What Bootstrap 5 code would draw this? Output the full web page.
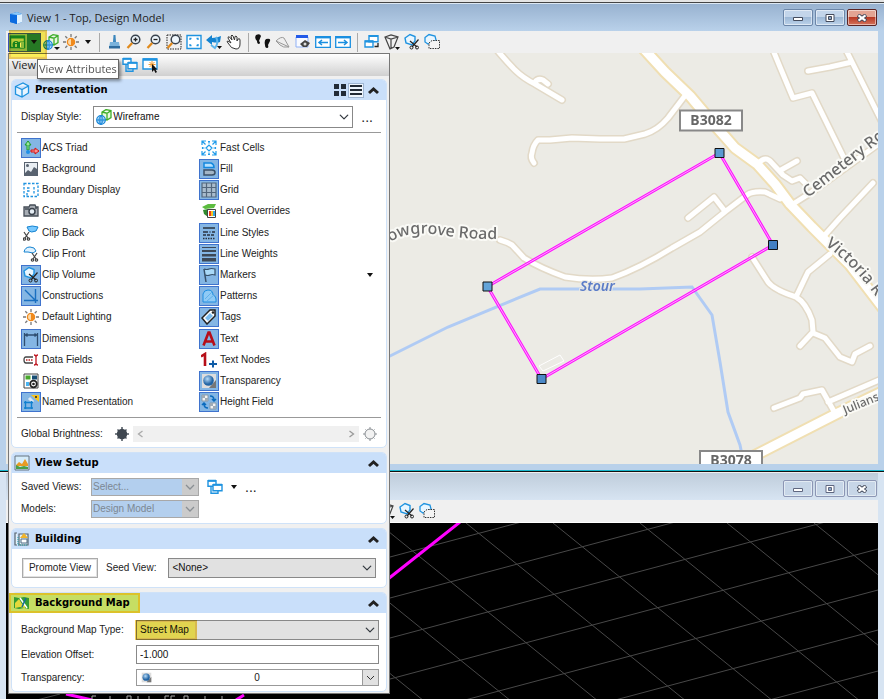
<!DOCTYPE html>
<html lang="en">
<head>
<meta charset="utf-8">
<meta name="viewport" content="width=device-width, initial-scale=1">
<title>View 1 - Top, Design Model</title>
<link href="https://cdn.jsdelivr.net/npm/bootstrap@5.3.0/dist/css/bootstrap.min.css" rel="stylesheet">
<style>
body{font-family:"Liberation Sans",Arial,sans-serif;font-size:10px;line-height:14px;color:#222;background:#f0f0f0}
button{padding:0;border:0;background:none;color:inherit}
svg{display:block;flex:none}
.win{border:solid #b9d1ea;border-width:0 6px 6px}
.win-a{z-index:5;box-shadow:0 1px #18b6cc,0 2px #111}
.edge-top{height:4px;background:linear-gradient(#e4e4e4 0 50%,#444 50% 75%,#dbe7f3 75%)}
.win-b{border-color:#d7e4f2;border-bottom:0;margin-top:3px;overflow:hidden}
.titlebar{height:27px;margin:0 -6px;padding:0 7px 0 9px;background:linear-gradient(#98b2d0,#b9d1ea);font:11px/16px "Open Sans",sans-serif;color:#222}
.win-b .titlebar{background:linear-gradient(#bfcddb,#d7e4f2)}
.wbtns{gap:2px}
.wbtn{width:30px;height:17px;border:1px solid #6c86a8;border-radius:2px;background:linear-gradient(#c3d5ea 45%,#9db8d6 50%,#bcd2ea);box-shadow:inset 0 0 0 1px #ffffff80}
.wbtn.shut{background:linear-gradient(#e3a493 45%,#b93a25 50%,#d4735c);border-color:#5c2525}
.win-b .wbtn{background:#c7d6e7;border-color:#8c96b4}
.toolstrip{height:22px;background:#f0f0f0}
.tool{width:20px;height:20px}
.vsep{width:1px;height:19px;background:#aaa;margin:0 4px}
.attr-btn{width:33px;height:19px;border:1px solid #3c53b8;background:#8fbfa0;margin-left:2px}
.attr-btn .drop{width:13px;height:17px;background:#268065}
.caret{width:0;height:0;border:3px solid transparent;border-top:4px solid #111;border-bottom:0}
.hl{background:#ffea00;opacity:.65;mix-blend-mode:multiply;pointer-events:none;box-shadow:inset 0 0 0 2px #f0b800}
.hl-tool{left:3px;top:-1px;width:38px;height:29px}
.tip{left:31px;top:28px;padding:1px;border:1px solid #666;background:#fff;color:#555;font:11px/16px "Open Sans",sans-serif;box-shadow:2px 2px 3px #0006;white-space:nowrap;z-index:9}
.panel{left:2px;top:100%;width:382px;border:1px solid #777;background:#f0f0f0}
.strip{height:22px;padding-left:3px;background:linear-gradient(#fff,#d0d0d0);font:11px/20px "Open Sans",sans-serif}
.strip-title{width:108px}
.groups{padding:3px 2px 1px;gap:4px}
.grp{border:1px solid #cfe2f8;border-radius:5px;background:#fff}
.ghead{height:20px;background:#c9dffa;border-radius:4px 4px 0 0;padding:0 7px 0 2px}
.ghead h2{font:bold 10px/20px "DejaVu Sans",Verdana,sans-serif;margin:0 0 0 5px;color:#000}
.gmark{margin-left:-5px;padding:0 10px 0 5px;height:20px;background:#c6de64;box-shadow:inset 0 0 0 2px #dcc22a}
.gb1{padding:6px 5px 5px}
.gb2{padding:5px 9px}
.gb3{padding:9px 10px}
.gb4{padding:7px 7px 5px 9px;gap:5px}
.viewmode{width:16px;height:15px}
.viewmode.on{background:#eef5fd;box-shadow:inset 0 0 0 1px #9fb6d3}
.form-select,.form-control{font-size:10px;line-height:14px;border:1px solid #888;border-radius:0;color:#111;padding:0 20px 0 3px;background-size:10px 10px;background-position:right 3px center;min-height:0}
.form-select{background-color:#e1e1e1}
.s-style{height:22px;width:260px;padding-left:19px;background-color:#fff}
.s-dim{height:18px;width:108px;background-color:#b3cfee!important;border-color:#a8a8a8;color:#7c8792;padding-left:1px;opacity:1}
.s-wrap .s-arrow{right:1px;top:1px;width:16px;height:16px;background:#cbcbcb;pointer-events:none}
.s-icon{left:3px;top:3px}
.rule{height:1px;background:#999}
.items{min-height:276px;grid-auto-rows:1fr;grid-template-columns:178px 1fr}
.tog{gap:1px;cursor:pointer}
.tog i{width:20px;height:20px;display:flex;align-items:center;justify-content:center;border:1px solid transparent}
.btn-check:checked+.tog i{background:#84b6e4;border-color:#3f73cd}
.dots{font-size:14px;line-height:14px}
.track{height:16px;background:#f0f0f0;color:#999}
.track input{opacity:0;height:14px}
.lab2{width:70px}
.lab4{width:115px}
.prom{height:20px;width:76px;border:1px solid #aaa;box-shadow:inset 0 0 0 1px #e1e1e1;background:#fff}
.s20{height:20px}.s19{height:19px}
.hl-sel{left:-1px;top:0;width:62px;height:20px}
.slider-box{height:17px;border:1px solid #999;background:#fff}
.slider-box button{width:16px;height:15px;background:#e1e1e1;border-left:1px solid #999}
.lead-space{width:371px}
.scene{width:100%;height:auto}
.grid-scene{width:100%;flex:1 1 0;min-height:100px;border-top:1px solid #fff;background:#000}
.road text{font-family:"Noto Sans","Open Sans",sans-serif}
</style>
<script src="https://cdn.jsdelivr.net/npm/bootstrap@5.3.0/dist/js/bootstrap.bundle.min.js"></script>
</head>
<body class="vh-100 overflow-hidden d-flex flex-column">

<svg width="0" height="0" class="position-absolute" aria-hidden="true">
<defs>
<radialGradient id="ball" cx=".4" cy=".35"><stop offset="0" stop-color="#b8dcf8"/><stop offset="1" stop-color="#2264a4"/></radialGradient>
<linearGradient id="hand" x1="0" y1="0" x2="1" y2="1"><stop offset="0" stop-color="#7cc0ea"/><stop offset="1" stop-color="#2a63b0"/></linearGradient>
<g id="sun" fill="none" stroke="#777" stroke-width="1.3"><path d="M8 0v3M8 13v3M0 8h3M13 8h3M2.3 2.3l2 2M11.7 11.7l2 2M13.7 2.3l-2 2M4.3 11.7l-2 2"/><circle cx="8" cy="8" r="3.6" stroke="#f08a1d" fill="#fbd9a8"/><path d="M8 4.4a3.6 3.6 0 0 1 0 7.2z" fill="#f08a1d" stroke="none"/></g>
<g id="globecube" fill="none"><path d="M6 3l4-2.400 5 1v7l-4 2.400-5-1zM6 3l5 1.200 4-2.600M11 4.200v7" stroke="#3fae2a" stroke-width="1.300" fill="#e8f8e0"/><circle cx="5" cy="11" r="4.300" fill="#bfe2fb" stroke="#1585d8" stroke-width="1.200"/><path d="M.7 11h8.600M5 6.700v8.600M5 6.700c-2.600 2.500-2.600 6 0 8.600 2.600-2.600 2.600-6.100 0-8.600" stroke="#1585d8"/></g>
<g id="cube" fill="#eaf5ff" stroke="#1f93e0" stroke-width="1.300"><path d="M1.500 4.500 9 1l5.500 3v7L8 15l-6.500-3zM1.500 4.500 8 7.500l6.500-3.500M8 7.500V15"/></g>
<g id="volcut" fill="none"><path d="M1 4l5-3.500 5 2v4.500l-3 4-6-2z" fill="#e9f6ff" stroke="#1f93e0" stroke-width="1.400"/><path d="M6 7l7 6M14.500 5.500 8 13" stroke="#222" stroke-width="1.200"/><circle cx="7.500" cy="13.500" r="1.500" stroke="#222"/><circle cx="13" cy="13.500" r="1.500" stroke="#222"/></g>
<g id="scis" fill="none" stroke="#444" stroke-width="1.200"><path d="M1 0l4 6M6 0 2 6"/><circle cx="1.500" cy="7" r="1.200"/><circle cx="5.500" cy="7" r="1.200"/></g>
<g id="volmask" fill="none"><path d="M1 3.500l4-3 6 1.500 1 4-3 2-5 2-3-2z" fill="#e9f6ff" stroke="#1f93e0" stroke-width="1.300"/><path d="M5 9l3-2.500h7.500v8H5z" fill="#f4f4f4" stroke="#333" stroke-dasharray="1.500 1"/></g>
<g id="frust" fill="none" stroke="#444" stroke-width="1.200"><path d="M1 3l6-2 7 2-4 10-4 2zM1 3l6 2 7-2M7 5v9"/><path d="M11 13h5l-2.500 3z" fill="#111" stroke="none"/></g>
<g id="wins" fill="#fff" stroke="#1f93e0" stroke-width="1.400"><path d="M1 1.700h8v5.600H1z"/><path d="M6 5.700h9v6H6z"/><path d="M4 7v7.300h7V12" fill="none"/><path d="M1 1.700h8M6 5.700h9" stroke-width="2"/></g>
<g id="xmark"><path d="M1 1l8 6M9 1 1 7" stroke="#444b5c" stroke-width="4"/><path d="M1.500 1.400l7 5.200M8.500 1.400l-7 5.200" stroke="#fff" stroke-width="2"/></g>
<g id="trans"><path d="M1 1h14v14H1z" fill="#ddd"/><path d="M8 15h7V7z" fill="#777"/><circle cx="7.500" cy="7.500" r="5.300" fill="url(#ball)"/></g>
<g id="up" fill="none" stroke="#222" stroke-width="3"><path d="M1 7l4.500-4L10 7"/></g>
<g id="lens" fill="none"><circle cx="9.500" cy="5.500" r="4.300" fill="#eef6fc" stroke="#39434e" stroke-width="1.500"/><path d="M6.200 9 1.500 14" stroke="#e08a1d" stroke-width="2.300"/></g>
<g id="vp" fill="#fff" stroke="#1a8fe0" stroke-width="1.300"><path d="M.7 2.700h14.600v10.600H.7z"/><path d="M.7 3.200h14.600" stroke-width="2.400"/></g>
<g id="down" fill="none" stroke="#8a8f94" stroke-width="1.300"><path d="M4 6l4 4 4-4"/></g>
</defs>
</svg>

<div class="edge-top"></div>
<section class="win win-a position-relative" aria-label="View 1">
  <header class="titlebar d-flex align-items-center">
    <svg width="14" height="14" viewBox="0 0 14 14"><path d="M1 3l7-2 5 2v8l-5 2-7-2z" fill="#1273d8"/><path d="M1 3l7 1v9l-7-2z" fill="#0b6be0"/><path d="M8 4l5-1v8l-5 2z" fill="#dff1ff"/><path d="M1 3l7-2 5 2-5 1z" fill="#8cc8f8"/></svg>
    <span class="ms-1">View 1 - Top, Design Model</span>
    <div class="ms-auto d-flex wbtns">
      <button class="wbtn d-flex align-items-center justify-content-center" aria-label="Minimize"><svg width="10" height="8"><path d="M.5 3.500h9v3h-9z" fill="#fff" stroke="#444b5c"/></svg></button>
      <button class="wbtn d-flex align-items-center justify-content-center" aria-label="Maximize"><svg width="10" height="8"><path d="M1 .5h8v7H1z" fill="#fff" stroke="#444b5c"/><path d="M3.500 2.500h3v3h-3z" fill="#8ba6c6" stroke="#444b5c"/></svg></button>
      <button class="wbtn shut d-flex align-items-center justify-content-center" aria-label="Close"><svg width="10" height="8"><use href="#xmark"/></svg></button>
    </div>
  </header>

  <div class="toolstrip position-relative d-flex align-items-center">
    <button class="attr-btn d-flex align-items-center justify-content-between" aria-label="View Attributes">
      <svg width="17" height="16" viewBox="0 0 17 16"><path d="M1.500 2.500h14v11h-14z" fill="#b9d9a0" stroke="#168a4c" stroke-width="1.500"/><path d="M1 3h15" stroke="#168a4c" stroke-width="3"/><circle cx="7" cy="10.500" r="3.500" fill="#168a4c"/><path d="M7 8v1M7 10v3" stroke="#fff" stroke-width="1.300"/><path d="M10.500 8h5v6h-5z" fill="#fff" stroke="#168a4c"/><path d="M12 10h3M12 12h3" stroke="#168a4c"/></svg>
      <span class="drop d-flex align-items-center justify-content-center"><span class="caret"></span></span>
    </button>
    <button class="tool" aria-label="Display style"><svg width="20" height="20" viewBox="-2 -2 20 20"><use href="#globecube"/><path d="M11 13h6l-3 3z" fill="#111"/></svg></button>
    <button class="tool" aria-label="Brightness"><svg width="20" height="20" viewBox="-2 -2 20 20"><use href="#sun"/></svg></button>
    <button class="px-1 me-1" aria-label="Brightness options"><span class="caret d-block"></span></button>
    <span class="vsep ms-0"></span>
    <button class="tool" aria-label="Update view"><svg width="20" height="20" viewBox="-2 -2 20 20"><path d="M7.500 1h2l.5 7H7z" fill="#3c87bd"/><path d="M4 8h9l1 6H3z" fill="#7ab3dc"/><path d="M3 12h11v2.500H3z" fill="#2e6c9e"/></svg></button>
    <button class="tool" aria-label="Zoom in"><svg width="20" height="20" viewBox="-2 -2 20 20"><use href="#lens"/><path d="M7.500 5.500h4M9.500 3.500v4" stroke="#222" stroke-width="1.300"/></svg></button>
    <button class="tool" aria-label="Zoom out"><svg width="20" height="20" viewBox="-2 -2 20 20"><use href="#lens"/><path d="M7.500 5.500h4" stroke="#222" stroke-width="1.300"/></svg></button>
    <button class="tool" aria-label="Window area"><svg width="20" height="20" viewBox="-2 -2 20 20"><path d="M1 1h14v14H1z" fill="none" stroke="#222" stroke-dasharray="1.500 1"/><use href="#lens"/></svg></button>
    <button class="tool" aria-label="Fit view"><svg width="20" height="20" viewBox="-2 -2 20 20"><path d="M1 1.500h14v13H1z" fill="#fff" stroke="#1f93e0" stroke-width="1.400"/><path d="M4 6V4.500h1.500M10.500 4.500H12V6M12 10v1.500h-1.500M5.500 11.500H4V10" fill="none" stroke="#1f93e0" stroke-width="1.300"/></svg></button>
    <button class="tool" aria-label="Rotate view"><svg width="20" height="20" viewBox="-2 -2 20 20"><path d="M0 6l6-5v3q5 0 9-2l-1 6q-3 1-8 0v3z" fill="#1683cf"/><path d="M10 3q3 6-1 11l-4-3" fill="none" stroke="#5cb5ec" stroke-width="2"/><path d="M11 12h5l-2.500 3z" fill="#111"/></svg></button>
    <button class="tool" aria-label="Pan view"><svg width="20" height="20" viewBox="-2 -2 20 20"><path d="M2 9Q0 7 2 7l3 2-3-5q0-2 1.500-1L6 6 5 2q1-2 2 0l1.500 4L9 2.500q1-1 2 .5v4l1-2q2-1 2 1v4q0 5-4 5-5 0-8-6z" fill="#fff" stroke="#333"/></svg></button>
    <span class="vsep"></span>
    <button class="tool" aria-label="Walk"><svg width="20" height="20" viewBox="-2 -2 20 20" fill="#111"><path d="M1 1q4-2 5 1L4 7q2 2 0 3-2 0-2-3Q-1 4 1 1zM11 5q5-1 4 2l-2 4q1 3-1 3-2 0-2-3-1-4 1-6z"/></svg></button>
    <button class="tool" aria-label="Fly"><svg width="20" height="20" viewBox="-2 -2 20 20"><path d="M1 7q5-5 8-3l5 9q-6 1-9-2zM1 7l13 6" fill="#eee" stroke="#999"/></svg></button>
    <button class="tool" aria-label="Navigate view"><svg width="20" height="20" viewBox="-2 -2 20 20"><path d="M1 3h12v10H1z" fill="#f8faff" stroke="#8fb0f5"/><path d="M1 2.500h12" stroke="#235ae8" stroke-width="3"/><path d="M5 10l5-4 5 3-3 4H8z" fill="#444"/><circle cx="10" cy="10" r="1.500" fill="#ddd"/></svg></button>
    <button class="tool" aria-label="View previous"><svg width="20" height="20" viewBox="-2 -2 20 20"><use href="#vp"/><path d="M13 8.500H5M7 6 4 8.500 7 11" fill="none" stroke="#1a8fe0" stroke-width="1.500"/></svg></button>
    <button class="tool" aria-label="View next"><svg width="20" height="20" viewBox="-2 -2 20 20"><use href="#vp"/><path d="M3 8.500h8M9 6l3 2.500L9 11" fill="none" stroke="#1a8fe0" stroke-width="1.500"/></svg></button>
    <span class="vsep"></span>
    <button class="tool" aria-label="Copy view"><svg width="20" height="20" viewBox="-2 -2 20 20"><path d="M5 1.700h9v6H5zM1 7h8v6H1z" fill="#fff" stroke="#1f93e0" stroke-width="1.400"/><path d="M5 2h9M1 7.500h8" stroke="#1f93e0" stroke-width="2"/><path d="M10.500 12.500H14V9" fill="none" stroke="#222" stroke-width="1.300"/></svg></button>
    <button class="tool" aria-label="Perspective"><svg width="20" height="20" viewBox="-2 -2 20 20"><use href="#frust"/></svg></button>
    <button class="tool" aria-label="Clip volume"><svg width="20" height="20" viewBox="-2 -2 20 20"><use href="#volcut"/></svg></button>
    <button class="tool" aria-label="Clip mask"><svg width="20" height="20" viewBox="-2 -2 20 20"><use href="#volmask"/></svg></button>

    <aside class="panel position-absolute" aria-label="View Attributes">
      <div class="strip d-flex align-items-center">
        <span class="strip-title">View</span>
        <button class="tool" aria-label="Dialogs"><svg width="20" height="20" viewBox="-2 -2 20 20"><use href="#wins"/></svg></button>
        <button class="tool" aria-label="Pick view"><svg width="20" height="20" viewBox="-2 -2 20 20"><path d="M1 2h14v10H1z" fill="#fff" stroke="#1f93e0" stroke-width="1.400"/><path d="M1 2.500h14" stroke="#1f93e0" stroke-width="2.500"/><path d="M10 4v7M6.500 7.500h7M7.500 5l5 5M12.500 5l-5 5" stroke="#f09a2e"/><path d="M10 7v8l2-2 1.500 3 1.500-1-1.500-2.500h2z" fill="#111"/></svg></button>
      </div>
      <div class="groups d-flex flex-column">

        <section class="grp">
          <div class="ghead d-flex align-items-center">
            <svg width="16" height="16" viewBox="0 0 16 16"><use href="#cube"/></svg>
            <h2 class="me-auto">Presentation</h2>
            <button class="viewmode d-flex align-items-center justify-content-center" aria-label="Icons"><svg width="12" height="12"><path d="M0 0h5v5H0zM7 0h5v5H7zM0 7h5v5H0zM7 7h5v5H7z" fill="#222b36"/></svg></button>
            <button class="viewmode on d-flex align-items-center justify-content-center" aria-label="List"><svg width="12" height="12"><path d="M0 2h12M0 6h12M0 10h12" stroke="#222b36" stroke-width="2"/></svg></button>
            <button class="ms-1" aria-label="Collapse Presentation"><svg width="11" height="9"><use href="#up"/></svg></button>
          </div>
          <div class="gb1">
            <div class="d-flex align-items-center ps-1">
              <label for="style" class="me-auto">Display Style:</label>
              <div class="position-relative me-2">
                <select id="style" class="form-select s-style"><option>Wireframe</option></select>
                <svg class="position-absolute s-icon" width="16" height="16"><use href="#globecube"/></svg>
              </div>
              <button class="dots pe-2" aria-label="Display style dialog">...</button>
            </div>
            <div class="rule mt-1 mb-1"></div>
            <div class="items d-grid align-items-center ps-1">
              <div><input type="checkbox" class="btn-check" id="c1" checked><label for="c1" class="tog d-flex align-items-center"><i><svg width="16" height="16" viewBox="0 0 16 16"><path d="M4 10V5H2l3-4 3 4H6v5z" fill="#9ce79c" stroke="#1a9a2a"/><path d="M8 10h4V8l4 3-4 3v-2H8z" fill="#ff9090" stroke="#d01515"/><circle cx="5" cy="12" r="2" fill="#1f8fe8"/></svg></i>ACS Triad</label></div>
              <div><input type="checkbox" class="btn-check" id="d1"><label for="d1" class="tog d-flex align-items-center"><i><svg width="16" height="16" viewBox="0 0 16 16" fill="none" stroke="#1f9bea" stroke-width="1.200"><path d="M5 8l3-3 3 3-3 3zM1 5V1h4M1 1l3.500 3.500M11 1h4v4M15 1l-3.500 3.500M15 11v4h-4M15 15l-3.500-3.500M5 15H1v-4M1 15l3.500-3.500M7 1.500h2M8 1.500v2M7 14.500h2M8 14.500v-2M1.500 7v2M1.500 8h2M14.500 7v2M14.500 8h-2"/></svg></i>Fast Cells</label></div>
              <div><input type="checkbox" class="btn-check" id="c2"><label for="c2" class="tog d-flex align-items-center"><i><svg width="16" height="16" viewBox="0 0 16 16"><path d="M1 1h14v14H1z" fill="#596370"/><path d="M2 2h12v6l-3-2-3 5-3-2-3 3z" fill="#e9eef3"/><circle cx="4.500" cy="4.500" r="1.500" fill="#596370"/></svg></i>Background</label></div>
              <div><input type="checkbox" class="btn-check" id="d2" checked><label for="d2" class="tog d-flex align-items-center"><i><svg width="16" height="16" viewBox="0 0 16 16"><path d="M3 2h7q3 1 3 4.500H3z" fill="#b5e1ff" stroke="#1388de" stroke-width="1.500"/><path d="M3 9h8q3 0 3 2.500T11 14H3z" fill="#a4b6c6" stroke="#3d5268" stroke-width="1.500"/></svg></i>Fill</label></div>
              <div><input type="checkbox" class="btn-check" id="c3"><label for="c3" class="tog d-flex align-items-center"><i><svg width="16" height="16" viewBox="0 0 16 16" fill="none" stroke="#1f93e0" stroke-width="1.300" stroke-dasharray="2.500 1.500"><path d="M1 1.500h14v13H1zM4 6h4M4 9h4M4 11v3M11 5v8"/></svg></i>Boundary Display</label></div>
              <div><input type="checkbox" class="btn-check" id="d3" checked><label for="d3" class="tog d-flex align-items-center"><i><svg width="16" height="16" viewBox="0 0 16 16"><path d="M1 1h14v14H1z" fill="#a9bccd"/><path d="M1 1h14v14H1zM5.500 1v14M10.500 1v14M1 5.500h14M1 10.500h14" fill="none" stroke="#53677c" stroke-width="1.200"/></svg></i>Grid</label></div>
              <div><input type="checkbox" class="btn-check" id="c4"><label for="c4" class="tog d-flex align-items-center"><i><svg width="16" height="16" viewBox="0 0 16 16"><path d="M1 4h5l1-2h5l1 2h2v9H1z" fill="#a7adb4" stroke="#454d57" stroke-width="1.300"/><path d="M2 6h4M12 5h2" stroke="#454d57" stroke-width="1.500"/><circle cx="9" cy="8.500" r="3" fill="#e6eef5" stroke="#3b434d" stroke-width="1.500"/></svg></i>Camera</label></div>
              <div><input type="checkbox" class="btn-check" id="d4"><label for="d4" class="tog d-flex align-items-center"><i><svg width="16" height="16" viewBox="0 0 16 16"><path d="M1 4l6-3 8 0-2 4-9 1z" fill="#5cbc3f"/><path d="M2 7l5-1v8l-4-3z" fill="#318b2f"/><path d="M6.500 6.500h8v8h-8z" fill="#fff" stroke="#444"/><path d="M8 8h2v5H8z" fill="#ed3b20"/><path d="M10 8h2v5h-2z" fill="#f7c61e"/><path d="M12 8h2v5h-2z" fill="#31a5e8"/></svg></i>Level Overrides</label></div>
              <div><input type="checkbox" class="btn-check" id="c5"><label for="c5" class="tog d-flex align-items-center"><i><svg width="16" height="16" viewBox="0 0 16 16"><path d="M4 2q5-2 11 0l-2 4q-5 2-7 0z" fill="#79c9ff" stroke="#1683d0"/><use href="#scis" x="0" y="7"/></svg></i>Clip Back</label></div>
              <div><input type="checkbox" class="btn-check" id="d5" checked><label for="d5" class="tog d-flex align-items-center"><i><svg width="16" height="16" viewBox="0 0 16 16" stroke="#29333f" stroke-width="1.500"><path d="M2 3h12"/><path d="M2 7h12" stroke-dasharray="5 1.500 1 1.500"/><path d="M2 10h12" stroke-dasharray="3 1"/><path d="M2 13.500h12" stroke-dasharray="1.500 1"/></svg></i>Line Styles</label></div>
              <div><input type="checkbox" class="btn-check" id="c6"><label for="c6" class="tog d-flex align-items-center"><i><svg width="16" height="16" viewBox="0 0 16 16"><path d="M1 6q1-5 6-5t6 4l-3 2-5-1z" fill="#dff2ff" stroke="#1683d0"/><use href="#scis" x="8" y="7"/></svg></i>Clip Front</label></div>
              <div><input type="checkbox" class="btn-check" id="d6" checked><label for="d6" class="tog d-flex align-items-center"><i><svg width="16" height="16" viewBox="0 0 16 16" fill="#3c4856"><path d="M1 1h14v1H1zM1 4h14v2H1zM1 8h14v2.500H1zM1 12h14v3.500H1z"/></svg></i>Line Weights</label></div>
              <div><input type="checkbox" class="btn-check" id="c7" checked><label for="c7" class="tog d-flex align-items-center"><i><svg width="16" height="16" viewBox="0 0 16 16"><use href="#volcut"/></svg></i>Clip Volume</label></div>
              <div class="d-flex align-items-center"><input type="checkbox" class="btn-check" id="d7" checked><label for="d7" class="tog d-flex align-items-center me-auto"><i><svg width="16" height="16" viewBox="0 0 16 16"><path d="M3 2q3 1 5 0t6 0v6q-3-1-5 0t-5 0" fill="#a9d9f8" stroke="#36506a" stroke-width="1.200"/><path d="M3 2l2 13" stroke="#36506a" stroke-width="1.500"/></svg></i>Markers</label><button class="pe-2" aria-label="Marker options"><span class="caret d-block"></span></button></div>
              <div><input type="checkbox" class="btn-check" id="c8" checked><label for="c8" class="tog d-flex align-items-center"><i><svg width="16" height="16" viewBox="0 0 16 16" fill="none" stroke="#1a6fc0" stroke-width="1.400"><path d="M12.500 1v14M1 12.500h14M2 2l10 10"/></svg></i>Constructions</label></div>
              <div><input type="checkbox" class="btn-check" id="d8" checked><label for="d8" class="tog d-flex align-items-center"><i><svg width="16" height="16" viewBox="0 0 16 16" fill="none"><path d="M2 14V6q1-4 5-4 5 0 5 5 3 1 3 4v3z" fill="#8fcaf5" stroke="#1e8de0"/><path d="M4 11l7-7M6 13l7-6" stroke="#5fb0ea"/></svg></i>Patterns</label></div>
              <div><input type="checkbox" class="btn-check" id="c9"><label for="c9" class="tog d-flex align-items-center"><i><svg width="16" height="16" viewBox="0 0 16 16"><use href="#sun"/></svg></i>Default Lighting</label></div>
              <div><input type="checkbox" class="btn-check" id="d9" checked><label for="d9" class="tog d-flex align-items-center"><i><svg width="16" height="16" viewBox="0 0 16 16"><path d="M1 9l8-8h5v6l-8 8z" fill="#fff" stroke="#222" stroke-width="1.500"/><path d="M4 9l5-5 3 3-5 5z" fill="#7bbdf0"/><circle cx="12" cy="3.500" r="1.300" fill="#222"/></svg></i>Tags</label></div>
              <div><input type="checkbox" class="btn-check" id="c10" checked><label for="c10" class="tog d-flex align-items-center"><i><svg width="16" height="16" viewBox="0 0 16 16" fill="none" stroke="#2e4e70" stroke-width="1.300"><path d="M1.500 2v13M14.500 2v13M2 4h12M4.500 2.500 2.500 4l2 1.500M11.500 2.500l2 1.500-2 1.500"/></svg></i>Dimensions</label></div>
              <div><input type="checkbox" class="btn-check" id="d10" checked><label for="d10" class="tog d-flex align-items-center"><i><svg width="16" height="16" viewBox="0 0 16 16"><path d="M2.500 14.500 7.500 1.500h1l5 13M5 10.500h6" fill="none" stroke="#b60e18" stroke-width="2.600"/></svg></i>Text</label></div>
              <div><input type="checkbox" class="btn-check" id="c11"><label for="c11" class="tog d-flex align-items-center"><i><svg width="16" height="16" viewBox="0 0 16 16" fill="none"><path d="M10 5H3Q1 5 1 8t2 3h7" stroke="#444" stroke-width="1.300"/><path d="M3 8h7" stroke="#b22" stroke-width="1.500" stroke-dasharray="1.500 1"/><path d="M11 3q2 0 2 2v6q0 2-2 2M15 3q-2 0-2 2v6q0 2 2 2" stroke="#c01822" stroke-width="1.300"/></svg></i>Data Fields</label></div>
              <div><input type="checkbox" class="btn-check" id="d11"><label for="d11" class="tog d-flex align-items-center"><i><svg width="16" height="16" viewBox="0 0 16 16" fill="none"><path d="M0 4.500l4-2.500v12" stroke="#b60e18" stroke-width="2.600"/><path d="M8 12h8M12 8.500v7" stroke="#0e5ba6" stroke-width="2"/></svg></i>Text Nodes</label></div>
              <div><input type="checkbox" class="btn-check" id="c12"><label for="c12" class="tog d-flex align-items-center"><i><svg width="16" height="16" viewBox="0 0 16 16"><path d="M1 1h14v14H1z" fill="#fff" stroke="#444"/><path d="M2.500 2.500h5v4h-5z" fill="#48a82c"/><path d="M9 2.500h5v4H9z" fill="#174d74"/><path d="M3 9h3v4H3z" fill="#49b4f2"/><circle cx="10.500" cy="11" r="3.300" fill="#fff" stroke="#222" stroke-width="1.800"/><circle cx="10.500" cy="11" r="1.300" fill="#222"/></svg></i>Displayset</label></div>
              <div><input type="checkbox" class="btn-check" id="d12" checked><label for="d12" class="tog d-flex align-items-center"><i><svg width="16" height="16" viewBox="0 0 16 16"><use href="#trans"/></svg></i>Transparency</label></div>
              <div><input type="checkbox" class="btn-check" id="c13" checked><label for="c13" class="tog d-flex align-items-center"><i><svg width="16" height="16" viewBox="0 0 16 16"><path d="M8 1h8v7z" fill="#fbc51e"/><circle cx="13" cy="3" r="1" fill="#222"/><path d="M6 4l4 4" stroke="#dbe8f4" stroke-width="3"/><path d="M2.500 7v8M8.500 7v8M1 8.500h9M1 14h9" stroke="#1180cf" stroke-width="1.400"/></svg></i>Named Presentation</label></div>
              <div><input type="checkbox" class="btn-check" id="d13" checked><label for="d13" class="tog d-flex align-items-center"><i><svg width="16" height="16" viewBox="0 0 16 16"><path d="M1 1h6v6H1zM9 9h6v6H9z" fill="#f2f2f2" stroke="#8a9aa8"/><path d="M1 1h3v3H1zM4 4h3v3H4zM9 9h3v3H9zM12 12h3v3h-3z" fill="#9fabb6"/><path d="M9 2q4 0 4 4M11 5l2 2 2-2M7 14q-4 0-4-4M1 11l2-2 2 2" fill="none" stroke="#0b6bbd" stroke-width="1.500"/></svg></i>Height Field</label></div>
            </div>
            <div class="rule mt-1"></div>
            <div class="d-flex align-items-center gap-1 pt-2 ps-1">
              <label for="bright" class="me-2">Global Brightness:</label>
              <svg width="14" height="14" viewBox="0 0 14 14"><path d="M7 0v14M0 7h14M2.500 2.500l9 9M11.500 2.500l-9 9" stroke="#4b545e" stroke-width="1.500"/><circle cx="7" cy="7" r="5.200" fill="#3f4750"/></svg>
              <div class="track d-flex align-items-center flex-grow-1 px-1">
                <button aria-label="Darker"><svg width="7" height="8"><path d="M5.500 1 1.500 4l4 3" fill="none" stroke="#aaa" stroke-width="1.300"/></svg></button>
                <input id="bright" type="range" class="flex-grow-1 w-50">
                <button aria-label="Brighter"><svg width="7" height="8"><path d="M1.500 1l4 3-4 3" fill="none" stroke="#999" stroke-width="1.300"/></svg></button>
              </div>
              <svg class="me-1" width="14" height="14" viewBox="0 0 14 14"><path d="M7 0v14M0 7h14M2.500 2.500l9 9M11.500 2.500l-9 9" stroke="#8a8f94"/><circle cx="7" cy="7" r="5" fill="#f2f2f2" stroke="#8a8f94"/></svg>
            </div>
          </div>
        </section>

        <section class="grp">
          <div class="ghead d-flex align-items-center">
            <svg width="16" height="16" viewBox="0 0 16 16"><path d="M1 1h14v14H1z" fill="#d5ecfb" stroke="#667580"/><path d="M2 10l3-3 3 2 3-5 3 5v2H2z" fill="#e99b24"/><path d="M2 10l4 2 4-1 4 1v2H2z" fill="#4c9f49"/></svg>
            <h2 class="me-auto">View Setup</h2>
            <button aria-label="Collapse View Setup"><svg width="11" height="9"><use href="#up"/></svg></button>
          </div>
          <div class="gb2 d-flex flex-column gap-1">
            <div class="d-flex align-items-center">
              <label for="saved" class="lab2">Saved Views:</label>
              <div class="s-wrap position-relative"><select id="saved" class="form-select s-dim" disabled><option>Select...</option></select><svg class="s-arrow position-absolute" viewBox="0 0 16 16"><use href="#down"/></svg></div>
              <button class="ms-2" aria-label="Apply saved view"><svg width="16" height="16" viewBox="0 0 16 16"><use href="#wins"/></svg></button>
              <button class="px-1 ms-1" aria-label="Saved view options"><span class="caret d-block"></span></button>
              <button class="dots ms-1" aria-label="Saved views dialog">...</button>
            </div>
            <div class="d-flex align-items-center">
              <label for="models" class="lab2">Models:</label>
              <div class="s-wrap position-relative"><select id="models" class="form-select s-dim" disabled><option>Design Model</option></select><svg class="s-arrow position-absolute" viewBox="0 0 16 16"><use href="#down"/></svg></div>
            </div>
          </div>
        </section>

        <section class="grp">
          <div class="ghead d-flex align-items-center">
            <svg width="16" height="16" viewBox="0 0 16 16"><path d="M3 2H1v12h2M5 3h9v11H5z" fill="#e4f3fb" stroke="#566470" stroke-width="1.200"/><path d="M6 7l4-5 4 5z" fill="#f0b32c"/><path d="M7 8h6v4H7z" fill="#fff" stroke="#4e6b82"/><path d="M4 6v8h9" fill="none" stroke="#23a0a0" stroke-dasharray="1 1"/></svg>
            <h2 class="me-auto">Building</h2>
            <button aria-label="Collapse Building"><svg width="11" height="9"><use href="#up"/></svg></button>
          </div>
          <div class="gb3 d-flex align-items-center">
            <button class="prom flex-shrink-0 text-nowrap">Promote View</button>
            <label for="seed" class="mx-2 pe-1 text-nowrap">Seed View:</label>
            <select id="seed" class="form-select s20"><option>&lt;None&gt;</option></select>
          </div>
        </section>

        <section class="grp">
          <div class="ghead d-flex align-items-center">
            <div class="gmark d-flex align-items-center me-auto">
              <svg width="16" height="14" viewBox="0 0 16 14"><path d="M0 1l5 1 5-1 5 1v11l-5-1-5 1-5-1z" fill="#349c34"/><path d="M1 7l4-4 3 5 3 1v3l-5-1-5 1z" fill="#e4d93a"/><path d="M6 2l7 10" stroke="#fff" stroke-width="1.500"/><path d="M12 2l-4 9" stroke="#136a9c" stroke-width="1.500"/></svg>
              <h2>Background Map</h2>
            </div>
            <button aria-label="Collapse Background Map"><svg width="11" height="9"><use href="#up"/></svg></button>
          </div>
          <div class="gb4 d-flex flex-column">
            <div class="d-flex align-items-center">
              <label for="mtype" class="lab4 flex-shrink-0">Background Map Type:</label>
              <div class="position-relative flex-grow-1">
                <select id="mtype" class="form-select s20"><option>Street Map</option></select>
                <div class="hl hl-sel position-absolute"></div>
              </div>
            </div>
            <div class="d-flex align-items-center">
              <label for="elev" class="lab4 flex-shrink-0">Elevation Offset:</label>
              <input id="elev" class="form-control s19" value="-1.000">
            </div>
            <div class="d-flex align-items-center">
              <span class="lab4 flex-shrink-0">Transparency:</span>
              <div class="slider-box d-flex align-items-center flex-grow-1">
                <svg class="ms-1" width="11" height="11" viewBox="0 0 16 16"><use href="#trans"/></svg>
                <span class="flex-grow-1 text-center">0</span>
                <button class="d-flex align-items-center justify-content-center" aria-label="Set transparency"><svg width="9" height="6"><path d="M1 1l3.500 3.500L8 1" fill="none" stroke="#333"/></svg></button>
              </div>
            </div>
          </div>
        </section>
      </div>
    </aside>
    <div class="hl hl-tool position-absolute"></div>
    <div class="tip position-absolute" role="tooltip">View Attributes</div>
  </div>

  <svg class="scene road" viewBox="6 53 872 411" role="img" aria-label="Street map">
    <defs>
      <g id="minor" fill="none" stroke-linecap="round" stroke-linejoin="round">
        <path d="M497 50Q507 62 515 70T535 84L562 100M535 82Q538 78 543 80L548 84"/>
        <path d="M534 163Q530 158 532 153 533 145 538 140L550 140 572 138 600 139 624 139 645 134Q658 130 668 118L684 97"/>
        <path d="M500 240Q507 242 512 245L524 258Q540 268 565 277 590 281 612 278 640 268 672 248L700 232 726 211 747 195Q752 191 765 192L780 199M724 210L714 197 688 218"/>
        <path d="M793 204L812 192 884 140M773 50L780 67 793 98 812 93 845 160M846 50L853 64 882 122M808 71L830 67 852 62"/>
        <path d="M758 164Q764 156 770 161L783 175 792 181 800 178 806 184M781 170L797 161M824 236L840 218 873 183"/>
        <path d="M752 257L768 282Q774 290 796 297 806 303 812 320L813 332 800 346M796 297L808 272 830 254M813 333L825 338 840 357 852 362 855 354 870 346"/>
        <path d="M774 408L800 398 803 394 822 390 836 415M828 402L884 378"/>
      </g>
      <g id="major" fill="none" stroke-linejoin="round"><path d="M643 48L665 72 690 96 712 122 735 148 757 164 775 184 790 204 812 227 850 265 886 312M750 458L840 412 884 391"/></g>
      <path id="owg" d="M390 242Q410 230 440 235T510 239"/>
      <path id="vic" d="M825 245Q851 264 870 289T900 335"/>
    </defs>
    <path d="M6 53h872v411H6z" fill="#ecebe5"/>
    <use href="#minor" stroke="#e2d9c7" stroke-width="8"/>
    <use href="#major" stroke="#f0dfb2" stroke-width="13"/>
    <use href="#minor" stroke="#fff" stroke-width="5"/>
    <use href="#major" stroke="#fff" stroke-width="9"/>
    <path d="M388 357L448 327 540 289 640 289 692 287 712 315 720 362 728 412 740 445 742 455" fill="none" stroke="#b0cbf4" stroke-width="3"/>
    <g fill="#6a6a6a" stroke="#fafaf6" stroke-width="4" paint-order="stroke" font-size="16" font-weight="500" stroke-linejoin="round">
      <text><textPath href="#owg">owgrove Road</textPath></text>
      <text transform="translate(808 198) rotate(-38)">Cemetery Ro</text>
      <text><textPath href="#vic">Victoria R</textPath></text>
      <text font-size="12" transform="translate(845 414) rotate(-22)">Julians</text>
      <text x="580" y="291" font-size="14" font-style="italic" font-weight="600" fill="#5b7cc8" stroke="#ecebe5" stroke-width="2">Stour</text>
    </g>
    <g fill="#fff" stroke="#888" stroke-width="2"><path d="M680 110.500h62v20h-62z"/><path d="M700 451h62v20h-62z"/></g>
    <g fill="#666" font-size="14" font-weight="700" text-anchor="middle"><text x="711" y="125">B3082</text><text x="731" y="465">B3078</text></g>
    <path d="M539 366l21-11 4 6-21 10z" fill="none" stroke="#fff"/>
    <path d="M487.500 286.500L719.500 153 773 245 541.500 379z" fill="none" stroke="#ff10ff" stroke-width="3"/>
    <path d="M487.500 286.500L719.500 153 773 245 541.500 379z" fill="none" stroke="#ffa8ff" stroke-width="1"/>
    <g fill="url(#hand)" stroke="#111"><path d="M483 282h9v9h-9zM715 148.500h9v9h-9zM768.500 240.500h9v9h-9zM537 374.500h9v9h-9z"/></g>
  </svg>
</section>

<section class="win win-b flex-grow-1 d-flex flex-column" aria-label="View 2">
  <header class="titlebar d-flex align-items-center flex-shrink-0">
    <div class="ms-auto d-flex wbtns pt-1">
      <button class="wbtn d-flex align-items-center justify-content-center" aria-label="Minimize"><svg width="10" height="8"><path d="M.5 3.500h9v3h-9z" fill="#fff" stroke="#5f6780"/></svg></button>
      <button class="wbtn d-flex align-items-center justify-content-center" aria-label="Maximize"><svg width="10" height="8"><path d="M1 .5h8v7H1z" fill="#fff" stroke="#5f6780"/><path d="M3.500 2.500h3v3h-3z" fill="#8ba6c6" stroke="#5f6780"/></svg></button>
      <button class="wbtn d-flex align-items-center justify-content-center" aria-label="Close"><svg width="10" height="8"><use href="#xmark"/></svg></button>
    </div>
  </header>
  <div class="toolstrip d-flex align-items-center flex-shrink-0">
    <span class="lead-space"></span>
    <button class="tool" aria-label="Perspective, view 2"><svg width="20" height="20" viewBox="-2 -2 20 20"><use href="#frust"/></svg></button>
    <button class="tool" aria-label="Clip volume, view 2"><svg width="20" height="20" viewBox="-2 -2 20 20"><use href="#volcut"/></svg></button>
    <button class="tool" aria-label="Clip mask, view 2"><svg width="20" height="20" viewBox="-2 -2 20 20"><use href="#volmask"/></svg></button>
  </div>
  <svg class="grid-scene" viewBox="6 523 872 176" preserveAspectRatio="xMinYMin slice" role="img" aria-label="3D grid">
    <g fill="none" stroke="#484848" stroke-width="1">
      <path d="M390 557L878 427M390 598L878 468M390 638L878 508M390 679L878 549M390 720L878 590M390 760L878 630M390 801L878 671M6 708L60 694"/>
      <path d="M291 523L511 701M378 523L598 701M466 523L686 701M553 523L773 701M640 523L860 701M727 523L947 701M814 523L1034 701M204 523L424 701"/>
    </g>
    <path d="M388 579L460 522M66 694l26 6M236 700l8-5" fill="none" stroke="#f0f" stroke-width="3"/>
    <path d="M92 699v-3h4M110 699v-3M127 699v-3h4v3M138 699v-3M149 699v-3M165 699v-3h4M171 699v-3h4M184 699v-3h4v3M205 699v-3M222 699v-3" fill="none" stroke="#aaa"/>
  </svg>
</section>
</body>
</html>
